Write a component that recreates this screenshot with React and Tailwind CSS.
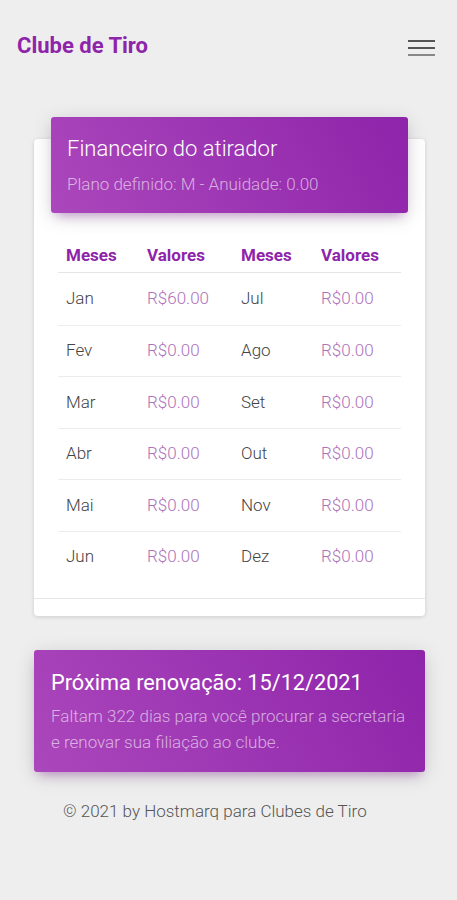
import React from 'react';

const rows = [
    ['Jan', 'R$60.00', 'Jul', 'R$0.00'],
    ['Fev', 'R$0.00', 'Ago', 'R$0.00'],
    ['Mar', 'R$0.00', 'Set', 'R$0.00'],
    ['Abr', 'R$0.00', 'Out', 'R$0.00'],
    ['Mai', 'R$0.00', 'Nov', 'R$0.00'],
    ['Jun', 'R$0.00', 'Dez', 'R$0.00'],
];

export default function App() {
    return (
        <div className="min-h-[900px] w-full bg-[#eeeeee] font-['Roboto',sans-serif] text-[#333]">
            {/* Navbar */}
            <div className="flex items-center justify-between pl-[17px] pr-[22px] pt-[31px] h-[60px]">
                <span className="text-[22px] font-bold text-[#8e24aa] leading-none">Clube de Tiro</span>
                <div className="flex flex-col gap-[5px] w-[27px] mt-[4px]">
                    <span className="h-[2px] bg-[#555]" />
                    <span className="h-[2px] bg-[#555]" />
                    <span className="h-[2px] bg-[#888]" />
                </div>
            </div>

            <div className="pl-[34px] pr-[32px] pt-[79px]">
                {/* Financeiro card */}
                <div className="bg-white rounded-[4px] shadow-[0_1px_4px_rgba(0,0,0,0.14)]">
                    <div className="mx-[17px] -translate-y-[22px] h-[96px] -mb-[22px] rounded-[3px] bg-[linear-gradient(60deg,#ab47bc,#8e24aa)] shadow-[0_4px_20px_rgba(0,0,0,0.14),0_7px_10px_-5px_rgba(156,39,176,0.4)] px-[16px] pt-[18px]">
                        <div className="text-[22px] font-light leading-[28px] text-white">Financeiro do atirador</div>
                        <div className="mt-[10px] text-[17px] font-light leading-[22px] text-white/60">Plano definido: M - Anuidade: 0.00</div>
                    </div>

                    <div className="px-[24px] pt-[26px] pb-[16px]">
                        <div className="grid grid-cols-[81px_94px_80px_88px] h-[34px] items-center border-b border-[#e6e6e6] text-[17px] font-bold text-[#8e24aa]">
                            <span className="pl-[8px]">Meses</span>
                            <span className="pl-[8px]">Valores</span>
                            <span className="pl-[8px]">Meses</span>
                            <span className="pl-[8px]">Valores</span>
                        </div>
                        {rows.map((r, i) => (
                            <div
                                key={r[0]}
                                className={`grid grid-cols-[81px_94px_80px_88px] h-[51.5px] items-center text-[17px] font-light ${i > 0 ? 'border-t border-[#ececec]' : ''}`}
                            >
                                <span className="pl-[8px] text-[#444]">{r[0]}</span>
                                <span className="pl-[8px] text-[#ad72b9]">{r[1]}</span>
                                <span className="pl-[8px] text-[#444]">{r[2]}</span>
                                <span className="pl-[8px] text-[#ad72b9]">{r[3]}</span>
                            </div>
                        ))}
                    </div>
                    <div className="h-[18px] border-t border-[#e6e6e6]" />
                </div>

                {/* Renovação card */}
                <div className="mt-[34px] h-[122px] rounded-[3px] bg-[linear-gradient(60deg,#ab47bc,#8e24aa)] shadow-[0_4px_20px_rgba(0,0,0,0.14),0_7px_10px_-5px_rgba(156,39,176,0.4)] px-[17px] pt-[19px]">
                    <div className="text-[21.7px] leading-[28px] text-white">Próxima renovação: 15/12/2021</div>
                    <div className="mt-[6px] text-[17px] font-light leading-[26px] text-white/60">
                        Faltam 322 dias para você procurar a secretaria e renovar sua filiação ao clube.
                    </div>
                </div>

                <div className="pl-[29px] mt-[27px] text-[17px] text-[#555] font-light">
                    © 2021 by Hostmarq para Clubes de Tiro
                </div>
            </div>
        </div>
    );
}
